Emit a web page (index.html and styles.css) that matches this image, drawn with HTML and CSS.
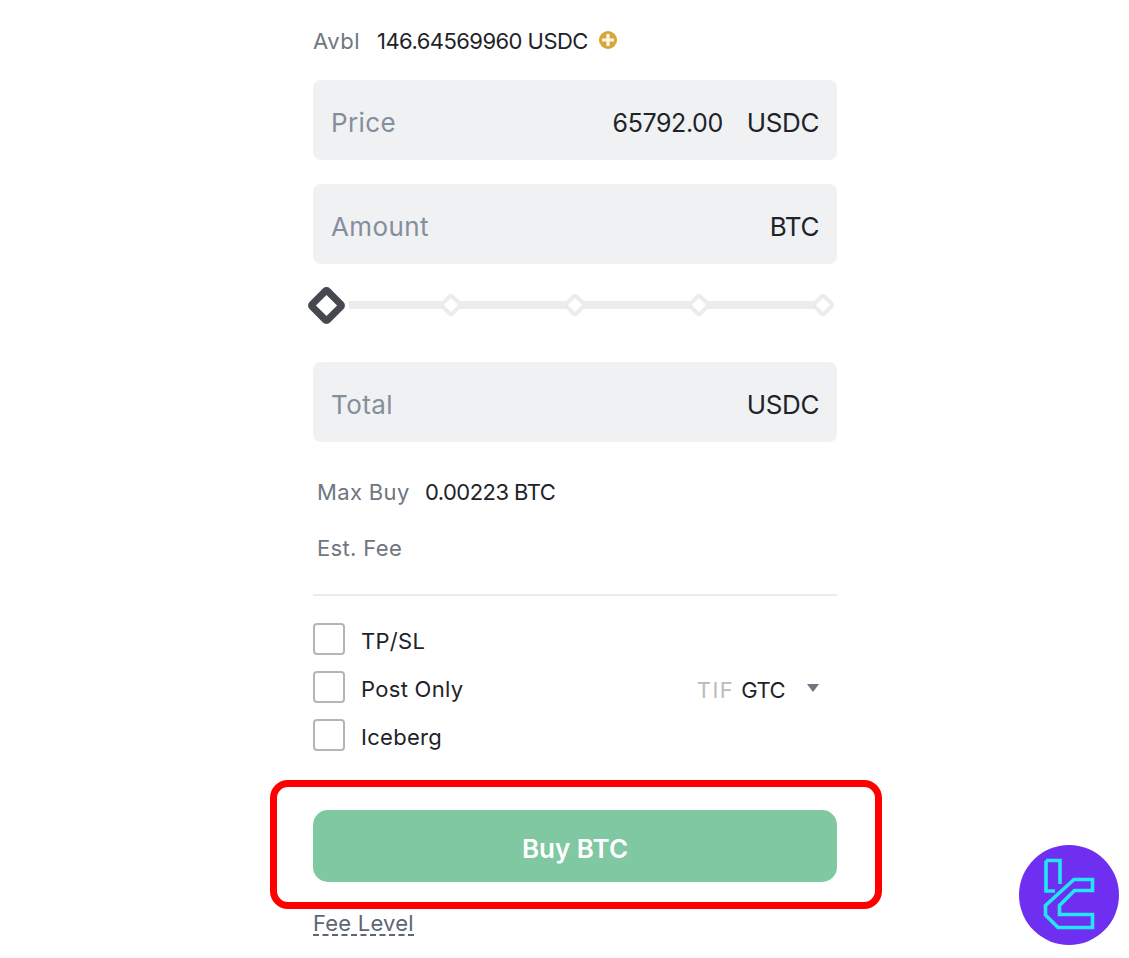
FILE: index.html
```html
<!DOCTYPE html>
<html lang="en">
<head>
<meta charset="utf-8">
<title>Buy BTC</title>
<link rel="stylesheet" href="styles.css">
</head>
<body>
<main class="panel">
  <div class="avbl">
    <span class="avbl-label">Avbl</span>
    <span class="avbl-value">146.64569960 USDC</span>
    <svg class="plus" viewBox="0 0 18 18" aria-hidden="true"><circle cx="9" cy="9" r="9" fill="#d6a63a"/><path d="M9 3v12M3 9h12" stroke="#fdf8e8" stroke-width="3.2"/></svg>
  </div>
  <div class="field"><span class="field-label">Price</span><span class="field-value">65792.00</span><span class="field-unit">USDC</span></div>
  <div class="field field-next"><span class="field-label">Amount</span><span class="field-unit">BTC</span></div>
  <div class="slider">
    <span class="knob"></span>
    <span class="track track-first"></span><span class="tick"></span>
    <span class="track"></span><span class="tick"></span>
    <span class="track"></span><span class="tick"></span>
    <span class="track"></span><span class="tick"></span>
  </div>
  <div class="field"><span class="field-label">Total</span><span class="field-unit">USDC</span></div>
  <div class="stat stat-max"><span class="stat-label">Max Buy</span><span class="stat-value">0.00223 BTC</span></div>
  <div class="stat stat-fee"><span class="stat-label">Est. Fee</span></div>
  <hr class="divider">
  <div class="options">
    <div class="checks">
      <label class="check"><span class="box"></span><span class="check-text">TP/SL</span></label>
      <label class="check"><span class="box"></span><span class="check-text">Post Only</span></label>
      <label class="check"><span class="box"></span><span class="check-text">Iceberg</span></label>
    </div>
    <div class="tif">
      <span class="tif-label">TIF</span><span class="tif-value">GTC</span>
      <svg class="caret" viewBox="0 0 14 10" aria-hidden="true"><path d="M1 1h12L7 9z" fill="#6f7680"/></svg>
    </div>
  </div>
  <button class="buy" type="button">Buy BTC</button>
  <a class="fee-level">Fee Level</a>
</main>
<div class="highlight"></div>
<svg class="logo" viewBox="0 0 100 100" aria-hidden="true">
  <circle cx="50" cy="50" r="50" fill="#6f2ff0"/>
  <g fill="none" stroke="#22e6f5" stroke-width="3.6" stroke-linejoin="miter">
    <path d="M27 15.5H41V39M27 15.5V46H36"/>
    <path d="M55 34.5H73.5V45.5H55.5L40.5 60.5V69.5H73.5V82.5H39L26.5 70V60.5Z"/>
  </g>
</svg>
</body>
</html>
```
FILE: styles.css
```css
* { box-sizing: border-box; }
html, body { margin: 0; height: 958px; overflow: hidden; background: #fff; }
body { font-family: "Inter", "Roboto", "Liberation Sans", sans-serif; color: #1e2329; position: relative; }
.panel { width: 524px; margin-left: 313px; padding-top: 27px; display: flex; flex-direction: column; }
.avbl { display: flex; align-items: center; height: 28px; font-size: 22px; line-height: 28px; }
.avbl-label { color: #6f7680; width: 64px; letter-spacing: 0.5px; }
.avbl-value { letter-spacing: -0.55px; }
.plus { width: 18px; height: 18px; margin-left: 11px; margin-top: -2px; }
.field { height: 80px; background: #f0f1f2; border-radius: 8px; display: flex; align-items: baseline; padding: 23px 18px 0; font-size: 26px; line-height: 40px; }
.avbl + .field { margin-top: 25px; }
.field-next { margin-top: 24px; }
.field-label { color: #848e9c; margin-right: auto; letter-spacing: 0.4px; }
.field-value { margin-right: 24px; font-size: 25px; letter-spacing: -0.4px; }
.field-unit { letter-spacing: -0.4px; }
.slider { display: flex; align-items: center; height: 42px; margin: 20px 0 36px -6px; width: 530px; }
.knob { width: 29px; height: 29px; flex: none; margin: 0 8px 0 5px; border: 7.5px solid #46484f; background: #fff; border-radius: 5px; transform: rotate(45deg); }
.track { flex: none; width: 109px; height: 8px; background: #ececec; }
.track-first { width: 94px; }
.tick { width: 18px; height: 18px; flex: none; background: #fff; border: 4px solid #ececec; border-radius: 4px; transform: rotate(45deg); margin: 0 -1.5px; }
.stat { display: flex; padding-left: 4px; font-size: 22px; line-height: 28px; }
.stat-max { margin-top: 36px; }
.stat-fee { margin-top: 28px; }
.stat-label { color: #6f7680; width: 108px; letter-spacing: 0.35px; }
.stat-value { letter-spacing: -0.55px; }
.divider { width: 100%; height: 2px; margin: 32px 0 27px; border: 0; background: #eaecef; }
.options { display: flex; align-items: center; justify-content: space-between; }
.checks { display: flex; flex-direction: column; gap: 16px; }
.check { display: flex; align-items: center; height: 32px; gap: 16px; font-size: 22px; }
.check-text { padding-top: 4px; letter-spacing: 0.3px; }
.box { width: 32px; height: 32px; border: 2px solid #b5b5b5; border-radius: 4px; }
.tif { display: flex; align-items: center; font-size: 22px; padding: 6px 17px 0 0; }
.tif-label { color: #bbbbbb; margin-right: 7px; letter-spacing: 1.4px; }
.tif-value { letter-spacing: -0.5px; }
.caret { width: 14px; height: 10px; margin: -4px 0 0 21px; }
.buy { height: 72px; margin-top: 59px; padding-top: 5px; border: 0; border-radius: 15px; background: #7fc8a1; color: #fff; font: 600 26px "Inter", "Roboto", sans-serif; }
.fee-level { align-self: flex-start; margin-top: 30px; font-size: 22px; line-height: 22px; letter-spacing: 0.2px; color: #5e6673; border-bottom: 2px dashed #5e6673; }
.highlight { position: absolute; left: 270px; top: 780px; width: 612px; height: 129px; border: 7px solid #fe0000; border-radius: 18px; }
.logo { position: absolute; left: 1019px; top: 845px; width: 100px; height: 100px; }
```
